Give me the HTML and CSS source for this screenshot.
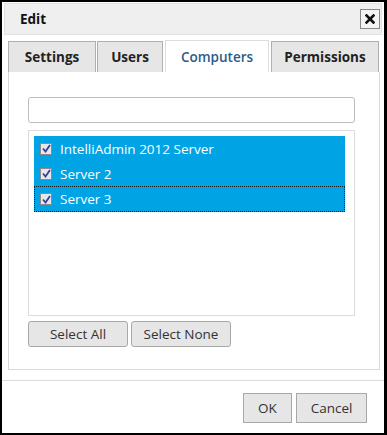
FILE: index.html
```html
<!DOCTYPE html>
<html>
<head>
<meta charset="utf-8">
<link rel="stylesheet" href="styles.css">
</head>
<body>
<div class="dialog">
  <div class="titlebar">
    <span class="title">Edit</span>
    <button class="close" aria-label="Close">
      <svg width="10" height="10" viewBox="0 0 10 10"><path d="M1.5 1.5L8.5 8.5M8.5 1.5L1.5 8.5" stroke="#111" stroke-width="2.6" stroke-linecap="square"/></svg>
    </button>
  </div>
  <div class="body">
    <div class="tabs">
      <div class="tab t1">Settings</div>
      <div class="tab t2">Users</div>
      <div class="tab t3 active">Computers</div>
      <div class="tab t4">Permissions</div>
    </div>
    <div class="panel">
      <input class="search" type="text">
      <div class="list">
        <div class="item"><span class="cb"><svg width="9" height="9" viewBox="0 0 9 9"><path d="M1 4.5L3.5 7.5L8 1" fill="none" stroke="#3a3f8f" stroke-width="1.8"/></svg></span>IntelliAdmin 2012 Server</div>
        <div class="item"><span class="cb"><svg width="9" height="9" viewBox="0 0 9 9"><path d="M1 4.5L3.5 7.5L8 1" fill="none" stroke="#3a3f8f" stroke-width="1.8"/></svg></span>Server 2</div>
        <div class="item focus"><span class="cb"><svg width="9" height="9" viewBox="0 0 9 9"><path d="M1 4.5L3.5 7.5L8 1" fill="none" stroke="#3a3f8f" stroke-width="1.8"/></svg></span>Server 3</div>
      </div>
      <div class="selbtns">
        <button class="btn sel-all">Select All</button>
        <button class="btn sel-none">Select None</button>
      </div>
    </div>
  </div>
  <div class="footer">
    <button class="btn ok">OK</button>
    <button class="btn cancel">Cancel</button>
  </div>
</div>
</body>
</html>
```
FILE: styles.css
```css
* { box-sizing: border-box; }
html, body { margin: 0; padding: 0; }
body {
  width: 387px;
  height: 435px;
  font-family: "Open Sans", "Noto Sans", sans-serif;
  font-size: 13.5px;
  background: #fff;
}
.dialog {
  width: 387px;
  height: 435px;
  border: 2px solid #000;
  border-right-width: 3px;
  background: #fff;
  display: flex;
  flex-direction: column;
}
.titlebar {
  margin: 1px 2px 0 2px;
  height: 32px;
  background: #efefef;
  border: 1px solid #e2e2e2;
  display: flex;
  align-items: center;
  justify-content: space-between;
  padding: 0 1px 0 15px;
}
.title {
  font-weight: bold;
  font-size: 13.5px;
  color: #111;
}
.close {
  width: 20px;
  height: 20px;
  border: 1px solid #888;
  background: #f4f4f4;
  padding: 0;
  display: flex;
  align-items: center;
  justify-content: center;
}
.body {
  padding: 5px 4px 0 6px;
}
.tabs {
  display: flex;
  height: 32px;
  align-items: flex-end;
}
.tab {
  height: 31px;
  background: #e6e6e6;
  border: 1px solid #b0b0b0;
  border-bottom: none;
  font-weight: bold;
  font-size: 13.5px;
  color: #222;
  display: flex;
  align-items: center;
  justify-content: center;
}
.t1 { width: 88px; }
.t2 { width: 66px; margin-left: 1px; }
.t3 { width: 104px; margin-left: 2px; }
.t4 { width: 108px; margin-left: 2px; }
.tab.active {
  background: #fff;
  border-color: #ddd;
  color: #2c5b8a;
  font-weight: 600;
  height: 32px;
}
.panel {
  width: 372px;
  height: 298px;
  border: 1px solid #d9d9d9;
  border-top: none;
  padding: 25px 0 0 19px;
}
.search {
  display: block;
  width: 327px;
  height: 26px;
  border: 1px solid #bdbdbd;
  border-radius: 3px;
  margin: 0;
  background: #fff;
}
.list {
  margin-top: 7px;
  width: 327px;
  height: 186px;
  border: 1px solid #dcdcdc;
  padding: 5px 9px 0 5px;
}
.item {
  height: 25px;
  background: #00a4e4;
  color: #fff;
  display: flex;
  align-items: center;
  padding-left: 5px;
  border: 1px solid #00a4e4;
}
.item.focus {
  border: 1px dotted #1a1a1a;
  height: 26px;
}
.cb {
  width: 12px;
  height: 12px;
  border: 1px solid #8a8a8a;
  background: #e6e6ef;
  display: inline-flex;
  align-items: center;
  justify-content: center;
  margin-right: 8px;
}
.selbtns {
  display: flex;
  gap: 3px;
  margin-top: 5px;
}
.btn {
  font-family: "Open Sans", "Noto Sans", sans-serif;
  font-size: 13.5px;
  color: #333;
  background: #e6e6e6;
  border: 1px solid #a8a8a8;
  border-radius: 3px;
  height: 26px;
  padding: 0;
}
.sel-all { width: 100px; }
.sel-none { width: 100px; }
.footer {
  margin-top: 10px;
  border-top: 1px solid #dcdcdc;
  display: flex;
  justify-content: flex-end;
  gap: 4px;
  padding: 12px 17px 0 0;
}
.ok, .cancel {
  height: 30px;
  border-radius: 0;
}
.ok { width: 49px; }
.cancel { width: 71px; }
```
